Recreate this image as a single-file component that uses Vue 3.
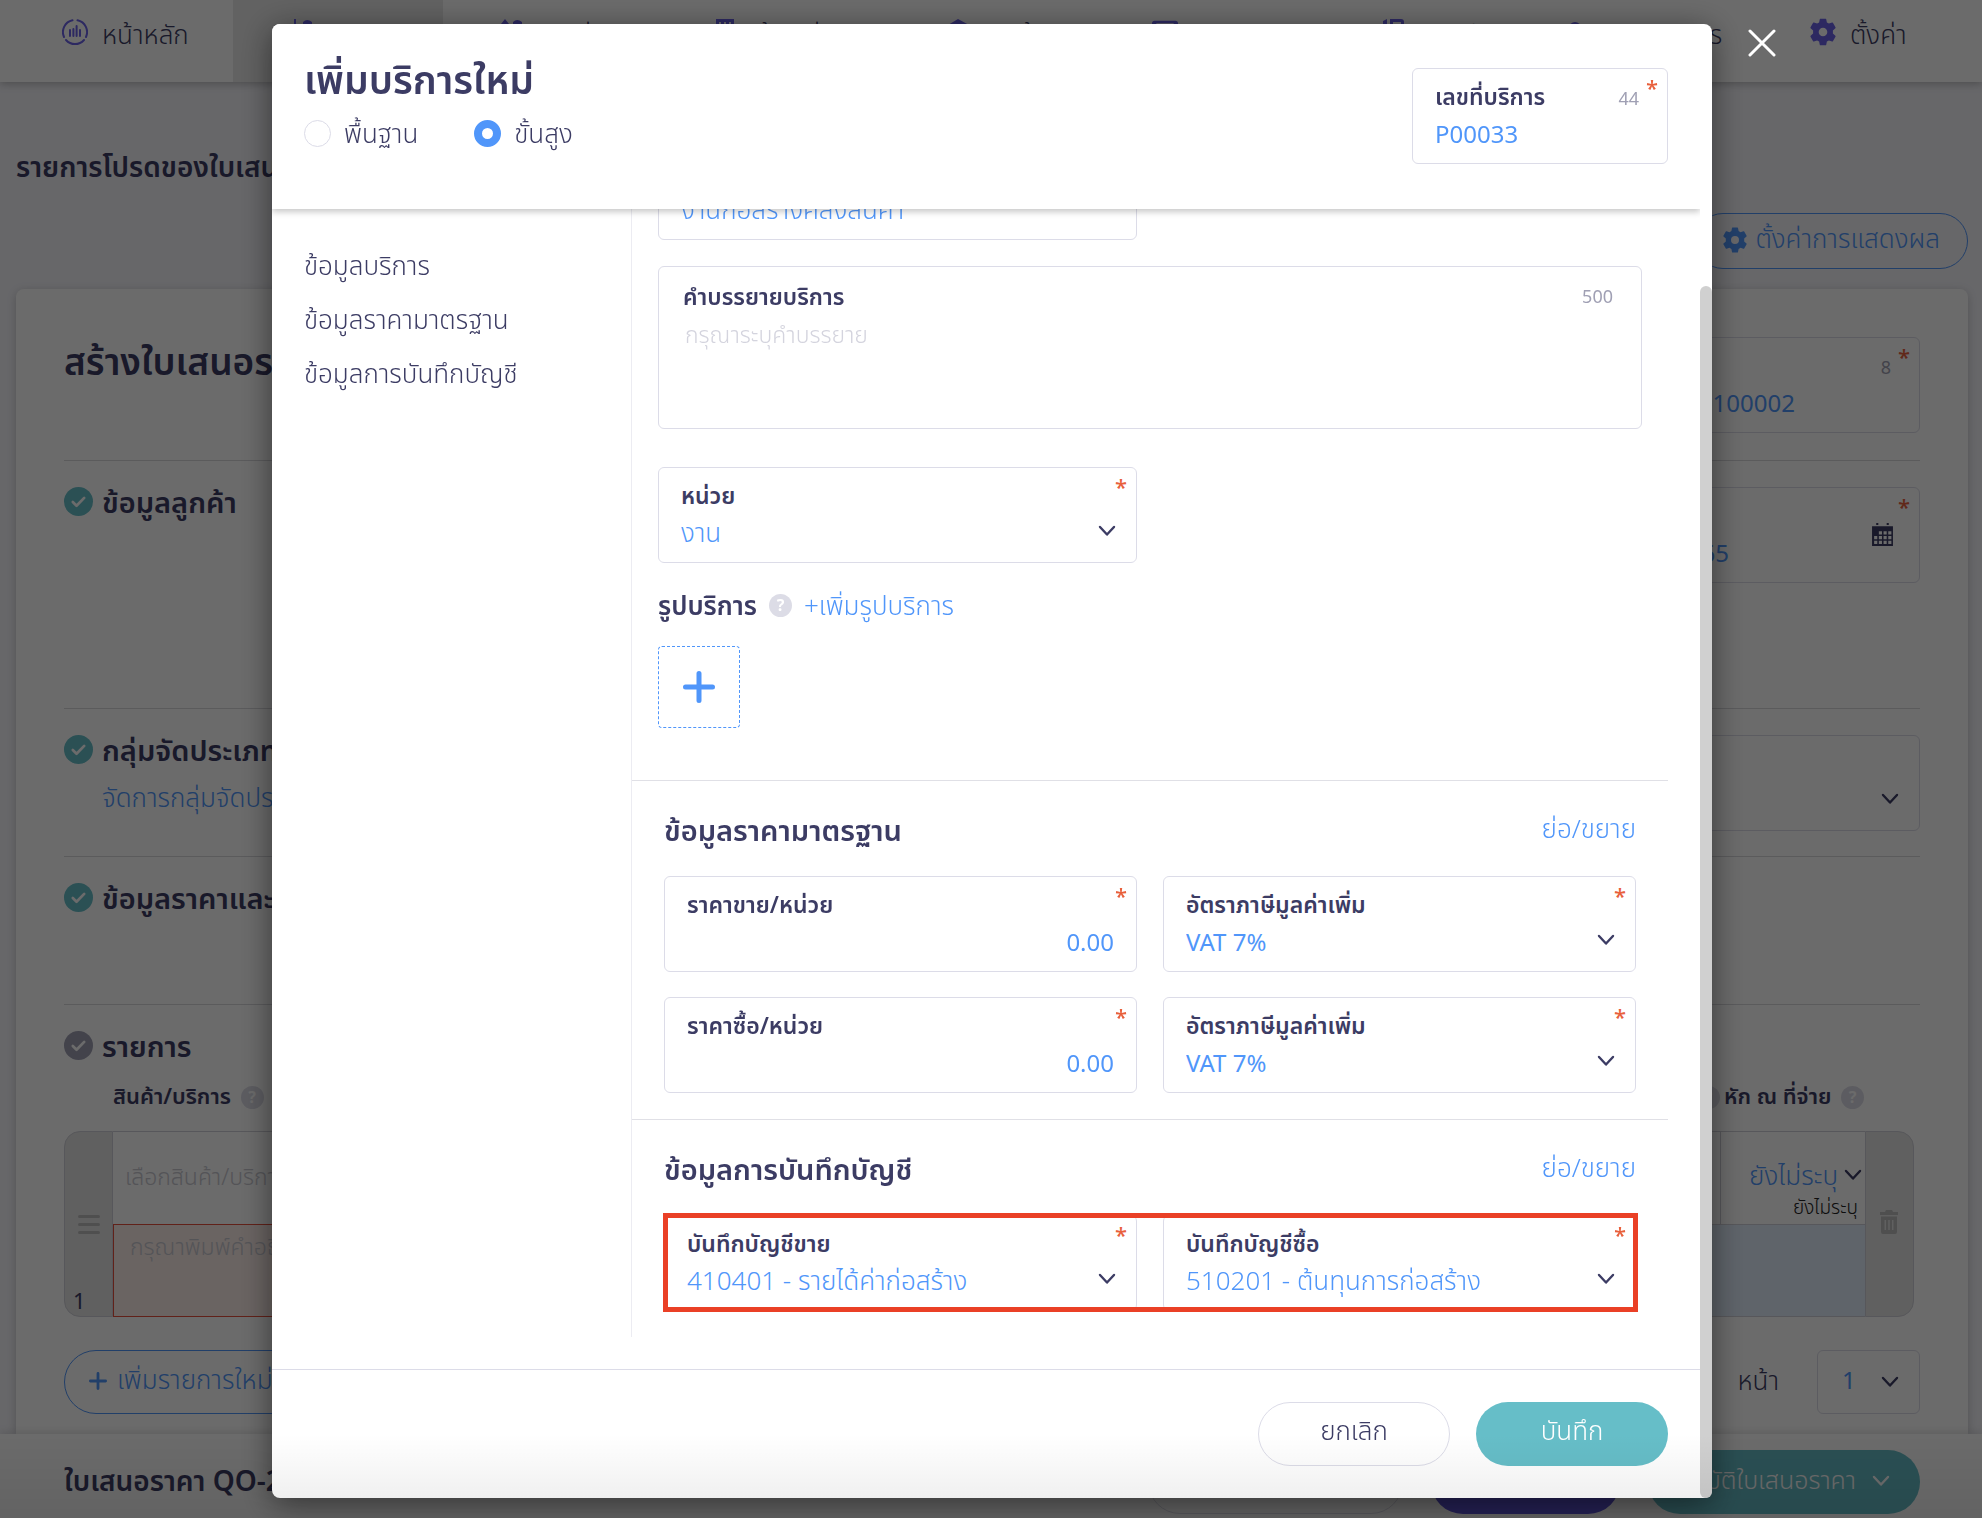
<template>
  <svg class="sprite" aria-hidden="true">
    <symbol id="chevron" viewBox="0 0 18 18">
      <path d="M2 5l7 7.5L16 5" fill="none" stroke="currentColor" stroke-width="2.4" stroke-linecap="round" stroke-linejoin="round" />
    </symbol>
    <symbol id="gear" viewBox="0 0 24 26">
      <path fill="currentColor" fill-rule="evenodd" d="M9.500 0.600h5q.4 0 .5.500l.6 3 1.900 1.100 2.900-1q.5-.2.8.3l2.400 4.200q.2.500-.1.800L21.200 11.600v2.800l2.300 2.100q.3.300.1.800l-2.400 4.200q-.3.500-.8.300l-2.900-1-1.900 1.100-.6 3q-.1.500-.5.500h-5q-.4 0-.5-.500l-.6-3-1.900-1.100-2.900 1q-.5.200-.8-.3L.4 17.300q-.2-.5.1-.8l2.300-2.100v-2.800L.5 9.500q-.3-.3-.1-.8l2.400-4.200q.3-.5.8-.3l2.900 1 1.900-1.100.6-3q.1-.5.400-.500zM12 9a4 4 0 1 0 0 8 4 4 0 0 0 0-8z" />
    </symbol>
    <symbol id="check" viewBox="0 0 28 28">
      <circle cx="14" cy="14" r="14" fill="currentColor" />
      <path d="M8.500 14.500l3.600 3.600 7.400-7.600" fill="none" stroke="#fff" stroke-width="2.600" stroke-linecap="round" stroke-linejoin="round" />
    </symbol>
    <symbol id="plus" viewBox="0 0 32 32">
      <path d="M16 2.500v27M2.500 16h27" fill="none" stroke="currentColor" stroke-width="5" stroke-linecap="round" />
    </symbol>
    <symbol id="home" viewBox="0 0 26 26">
      <g fill="none" stroke="currentColor" stroke-width="2" stroke-linecap="round">
        <path d="M10.500 1.300A12 12 0 0 0 2 18M15.500 1.300A12 12 0 0 1 24 18M4 21a12 12 0 0 0 18 0" />
        <path d="M8 11v6M11.400 10v7M14.600 7v10M18 11v6" />
      </g>
    </symbol>
    <symbol id="income" viewBox="0 0 26 26">
      <path fill="currentColor" d="M5 0h2v6h3l-4 5-4-5h3zM14 3q4-4 9 0v4h-9zM2 13h20v11H2z" />
    </symbol>
    <symbol id="expense" viewBox="0 0 26 26">
      <path fill="currentColor" d="M6 0l4 5H7v6H5V5H2zM14 3q4-4 9 0v4h-9zM2 13h20v11H2z" />
    </symbol>
    <symbol id="building" viewBox="0 0 26 26">
      <path fill="currentColor" fill-rule="evenodd" d="M1 0h18v26H1zM4 3v3h2V3zm5 0v3h2V3zm5 0v3h2V3z" />
    </symbol>
    <symbol id="box" viewBox="0 0 26 26">
      <path fill="currentColor" d="M10 0l11 6v13l-11 6-10-6V6z" />
    </symbol>
    <symbol id="card" viewBox="0 0 30 26">
      <path fill="currentColor" fill-rule="evenodd" d="M3 0h24q3 0 3 3v20H0V3q0-3 3-3zM5 3v2h20V3z" />
    </symbol>
    <symbol id="book" viewBox="0 0 26 26">
      <path fill="currentColor" fill-rule="evenodd" d="M0 2l4-2v26H0zM7 0h11q3 0 3 3v23H7zM10 3v4h8V3z" />
    </symbol>
    <symbol id="user" viewBox="0 0 26 26">
      <circle cx="12" cy="9" r="6" fill="currentColor" />
    </symbol>
    <symbol id="calendar" viewBox="0 0 20 22">
      <path fill="currentColor" fill-rule="evenodd" d="M0 3h20v19H0zM6.500 8v3h3V8zm4.500 0v3h3V8zm4.500 0v3h3V8zM2 12.500v3h3v-3zm4.500 0v3h3v-3zm4.500 0v3h3v-3zm4.500 0v3h3v-3zM2 17v3h3v-3zm4.500 0v3h3v-3zm4.500 0v3h3v-3zm4.500 0v3h3v-3zM4 0h2v2H4zM14 0h2v2h-2z" />
    </symbol>
    <symbol id="trash" viewBox="0 0 20 24">
      <path fill="currentColor" fill-rule="evenodd" d="M7 0h6l1 2h5v3H1V2h5zM2 6.500h16V22q0 2-2 2H4q-2 0-2-2zM5.500 10v10h1.500V10zm3.700 0v10h1.600V10zm3.800 0v10h1.500V10z" />
    </symbol>
  </svg>

  <div class="page">
    <nav class="nav">
      <a v-for="item in navItems" :key="item.label" href="#" class="nav__item" :class="{ 'nav__item--active': item.active }">
        <svg class="nav__icon"><use :href="'#' + item.icon" /></svg>
        <span>{{ item.label }}</span>
      </a>
    </nav>

    <header class="page__head">
      <h1 class="page__title">รายการโปรดของใบเสนอราคา</h1>
      <button class="pill pill--blue pill--settings">
        <svg class="icon24"><use href="#gear" /></svg>
        ตั้งค่าการแสดงผล
      </button>
    </header>

    <main class="card">
      <div class="card__head">
        <h2 class="card__title">สร้างใบเสนอราคา</h2>
        <label class="field field--side">
          <span class="field__label">เลขที่เอกสาร</span>
          <span class="field__count">8</span>
          <span class="field__star">*</span>
          <input class="field__input field__input--end" v-model="docNo" />
        </label>
      </div>

      <section class="row row--tall">
        <svg class="row__check"><use href="#check" /></svg>
        <div class="row__main"><h3>ข้อมูลลูกค้า</h3></div>
        <label class="field field--side">
          <span class="field__label">วันที่ออก</span>
          <span class="field__star">*</span>
          <input class="field__input field__input--date" v-model="docDate" />
          <svg class="field__calendar"><use href="#calendar" /></svg>
        </label>
      </section>

      <section class="row">
        <svg class="row__check"><use href="#check" /></svg>
        <div class="row__main">
          <h3>กลุ่มจัดประเภท</h3>
          <a href="#">จัดการกลุ่มจัดประเภท</a>
        </div>
        <label class="field field--side">
          <select class="field__input" aria-label="กลุ่มจัดประเภท"><option></option></select>
          <svg class="field__chevron"><use href="#chevron" /></svg>
        </label>
      </section>

      <section class="row">
        <svg class="row__check"><use href="#check" /></svg>
        <div class="row__main"><h3>ข้อมูลราคาและภาษี</h3></div>
      </section>

      <section class="row row--list">
        <svg class="row__check row__check--grey"><use href="#check" /></svg>
        <div class="row__main"><h3>รายการ</h3></div>
      </section>

      <table class="items">
        <colgroup>
          <col class="items__edge" />
          <col />
          <col class="items__vat" />
          <col class="items__wht" />
          <col class="items__edge" />
        </colgroup>
        <thead>
          <tr>
            <th></th>
            <th>สินค้า/บริการ <span class="help">?</span></th>
            <th class="items__right"><span class="help">?</span></th>
            <th class="items__indent" colspan="2">หัก ณ ที่จ่าย <span class="help">?</span></th>
          </tr>
        </thead>
        <tbody>
          <tr class="items__top">
            <td class="items__grab" rowspan="2">
              <span class="bars"><i></i><i></i><i></i></span>
              <span class="items__no">1</span>
            </td>
            <td><input class="items__input" placeholder="เลือกสินค้า/บริการ" aria-label="สินค้า/บริการ" /></td>
            <td></td>
            <td class="items__tax">
              <div class="items__pick">ยังไม่ระบุ <svg class="icon18"><use href="#chevron" /></svg></div>
              <small>ยังไม่ระบุ</small>
            </td>
            <td class="items__del" rowspan="2"><svg class="items__trash"><use href="#trash" /></svg></td>
          </tr>
          <tr class="items__bottom">
            <td class="items__error"><textarea class="items__input" placeholder="กรุณาพิมพ์คำอธิบาย" aria-label="คำอธิบาย"></textarea></td>
            <td class="items__sum" colspan="2"></td>
          </tr>
        </tbody>
      </table>

      <div class="pager">
        <button class="pill pill--blue pill--add">
          <svg class="icon18"><use href="#plus" /></svg>
          เพิ่มรายการใหม่
        </button>
        <label class="pager__label" for="page-no">หน้า</label>
        <span class="pager__box">
          <select id="page-no" class="pager__select"><option>1</option></select>
          <svg class="icon18"><use href="#chevron" /></svg>
        </span>
      </div>
    </main>

    <footer class="bar">
      <strong class="bar__title">ใบเสนอราคา QO-20220100002</strong>
      <button class="pill bar__close">ปิด</button>
      <button class="pill bar__draft">บันทึกร่าง</button>
      <button class="pill bar__approve">อนุมัติใบเสนอราคา <svg class="icon18"><use href="#chevron" /></svg></button>
    </footer>
  </div>

  <div class="overlay">
    <div class="modal" role="dialog" aria-labelledby="modal-title">
      <div class="modal__content">
        <header class="modal__head">
          <div>
            <h2 id="modal-title" class="modal__title">เพิ่มบริการใหม่</h2>
            <div class="modes">
              <label v-for="m in modes" :key="m.value" class="modes__item">
                <input type="radio" name="mode" :value="m.value" v-model="mode" />
                {{ m.label }}
              </label>
            </div>
          </div>
          <label class="field field--code">
            <span class="field__label">เลขที่บริการ</span>
            <span class="field__count">44</span>
            <span class="field__star">*</span>
            <input class="field__input" v-model="serviceNo" />
          </label>
        </header>

        <div class="modal__body">
          <nav class="side">
            <a v-for="s in sections" :key="s" href="#">{{ s }}</a>
          </nav>

          <form class="form">
            <div class="form__main">
              <label class="field field--half">
                <span class="field__label">ชื่อบริการ</span>
                <input class="field__input field__input--thai" v-model="serviceName" />
              </label>
              <label class="field field--area">
                <span class="field__label">คำบรรยายบริการ</span>
                <span class="field__count">500</span>
                <textarea class="field__input" placeholder="กรุณาระบุคำบรรยาย"></textarea>
              </label>
              <label class="field field--half">
                <span class="field__label">หน่วย</span>
                <span class="field__star">*</span>
                <select class="field__input field__input--thai"><option>งาน</option></select>
                <svg class="field__chevron"><use href="#chevron" /></svg>
              </label>
              <div class="photo">
                <strong>รูปบริการ</strong>
                <span class="help">?</span>
                <a href="#">+เพิ่มรูปบริการ</a>
              </div>
              <button type="button" class="photo__add" aria-label="เพิ่มรูปบริการ">
                <svg><use href="#plus" /></svg>
              </button>
            </div>

            <section class="group">
              <div class="group__head">
                <h3>ข้อมูลราคามาตรฐาน</h3>
                <a href="#">ย่อ/ขยาย</a>
              </div>
              <div class="group__grid">
                <template v-for="p in prices" :key="p.label">
                  <label class="field">
                    <span class="field__label">{{ p.label }}</span>
                    <span class="field__star">*</span>
                    <input class="field__input field__input--num" v-model="p.value" />
                  </label>
                  <label class="field">
                    <span class="field__label">อัตราภาษีมูลค่าเพิ่ม</span>
                    <span class="field__star">*</span>
                    <select class="field__input"><option>{{ p.vat }}</option></select>
                    <svg class="field__chevron"><use href="#chevron" /></svg>
                  </label>
                </template>
              </div>
            </section>

            <section class="group">
              <div class="group__head">
                <h3>ข้อมูลการบันทึกบัญชี</h3>
                <a href="#">ย่อ/ขยาย</a>
              </div>
              <div class="group__grid group__grid--marked">
                <label v-for="a in accounts" :key="a.label" class="field">
                  <span class="field__label">{{ a.label }}</span>
                  <span class="field__star">*</span>
                  <select class="field__input field__input--thai"><option>{{ a.value }}</option></select>
                  <svg class="field__chevron"><use href="#chevron" /></svg>
                </label>
              </div>
            </section>
          </form>
        </div>

        <footer class="modal__foot">
          <button class="pill pill--cancel">ยกเลิก</button>
          <button class="pill pill--save">บันทึก</button>
        </footer>
      </div>
      <div class="modal__scroll"><div class="modal__thumb"></div></div>
      <button class="modal__close" aria-label="ปิด">
        <svg viewBox="0 0 28 28"><path d="M2 2l24 24M26 2L2 26" stroke="#fff" stroke-width="3" stroke-linecap="round" /></svg>
      </button>
    </div>
    <div class="shade"></div>
  </div>
</template>

<script setup>
import { ref } from 'vue'

const navItems = [
  { label: 'หน้าหลัก', icon: 'home' },
  { label: 'รายรับ', icon: 'income', active: true },
  { label: 'รายจ่าย', icon: 'expense' },
  { label: 'ผู้ติดต่อ', icon: 'building' },
  { label: 'สินค้า', icon: 'box' },
  { label: 'การเงิน', icon: 'card' },
  { label: 'บัญชี', icon: 'book' },
  { label: 'คลังเอกสาร', icon: 'user' },
  { label: 'ตั้งค่า', icon: 'gear' },
]

const modes = [
  { value: 'basic', label: 'พื้นฐาน' },
  { value: 'advanced', label: 'ขั้นสูง' },
]
const mode = ref('advanced')

const sections = ['ข้อมูลบริการ', 'ข้อมูลราคามาตรฐาน', 'ข้อมูลการบันทึกบัญชี']

const docNo = ref('QO-20220100002')
const docDate = ref('15/01/2565')
const serviceNo = ref('P00033')
const serviceName = ref('งานก่อสร้างคลังสินค้า')

const prices = ref([
  { label: 'ราคาขาย/หน่วย', value: '0.00', vat: 'VAT 7%' },
  { label: 'ราคาซื้อ/หน่วย', value: '0.00', vat: 'VAT 7%' },
])

const accounts = [
  { label: 'บันทึกบัญชีขาย', value: '410401 - รายได้ค่าก่อสร้าง' },
  { label: 'บันทึกบัญชีซื้อ', value: '510201 - ต้นทุนการก่อสร้าง' },
]
</script>

<style>
body {
  font-family: "Noto Sans", "Noto Sans Thai", sans-serif;
  font-size: 26px;
  font-weight: 300;
  color: #3c3c64;
}
</style>

<style scoped>
* { box-sizing: border-box; }
a { color: #5096fa; text-decoration: none; }
h1, h2, h3 { margin: 0; font-weight: 600; }
button, input, select, textarea {
  font: inherit;
  color: inherit;
  margin: 0;
  padding: 0;
  border: 0;
  background: none;
}
select { appearance: none; }
.sprite { position: absolute; width: 0; height: 0; }
.icon18 { width: 18px; height: 18px; color: #3c3c64; }
.icon24 { width: 24px; height: 26px; }

.page {
  height: 100vh;
  display: flex;
  flex-direction: column;
  overflow: hidden;
  background: #f5f5fa;
}

.nav {
  display: grid;
  grid-template-columns: 227fr 210fr 216fr 233fr 204fr 231fr 180fr 247fr 228fr;
  flex: none;
  height: 82px;
  padding-left: 6px;
  background: #fff;
  box-shadow: 0 2px 8px rgba(0,0,0,.25);
}
.nav__item {
  display: flex;
  gap: 14px;
  padding: 18px 0 0 56px;
  line-height: 32px;
  white-space: nowrap;
  color: #3c3c64;
}
.nav__item--active { background: #e9e9e9; }
.nav__icon { width: 26px; height: 28px; color: #6c63e8; }

.page__head {
  display: flex;
  flex-direction: column;
  padding: 64px 14px 20px 16px;
}
.page__title { font-size: 28px; line-height: 40px; }

.pill {
  display: inline-flex;
  align-items: center;
  justify-content: center;
  height: 64px;
  padding-bottom: 4px;
  border-radius: 32px;
}
.pill--blue { border: 1px solid #5096fa; color: #5096fa; }
.pill--settings {
  align-self: flex-end;
  gap: 8px;
  height: 56px;
  margin-top: 27px;
  padding: 0 27px 2px;
}

.card {
  flex: 1;
  margin: 0 14px 0 16px;
  padding: 0 48px;
  border-radius: 8px 8px 0 0;
  background: #fff;
  box-shadow: 0 2px 10px rgba(0,0,0,.2);
  min-height: 0;
}
.card__head {
  display: flex;
  justify-content: space-between;
  height: 171px;
  padding-top: 48px;
}
.card__title { font-size: 37px; line-height: 48px; }

.row {
  display: flex;
  align-items: flex-start;
  gap: 9px;
  height: 148px;
  padding-top: 26px;
  border-top: 1px solid #d8d8dc;
}
.row--tall { height: 248px; }
.row--list { height: 79px; }
.row__main { flex: 1; }
.row__main h3 { font-size: 29px; line-height: 30px; }
.row__main a { display: block; margin-top: 16px; line-height: 32px; }
.row__check { width: 29px; height: 29px; color: #66bec8; }
.row__check--grey { color: #a0a0b3; }

.field {
  position: relative;
  display: block;
  height: 96px;
  padding: 13px 22px;
  border: 1px solid #dcdce8;
  border-radius: 6px;
  background: #fff;
}
.field__label {
  display: block;
  height: 34px;
  font-size: 23px;
  font-weight: 600;
  line-height: 28px;
}
.field__input {
  display: block;
  width: 100%;
  height: 36px;
  font-size: 24px;
  font-weight: 400;
  line-height: 36px;
  color: #5096fa;
  outline: none;
  resize: none;
}
.field__input--thai { height: 34px; font-size: 26px; font-weight: 300; line-height: 34px; }
.field__input--num { text-align: right; }
.field__input--end { text-align: right; padding-right: 102px; }
.field__input--date { text-align: right; padding-right: 168px; }
.field__input::placeholder { color: #d4d4de; font-size: 23px; font-weight: 300; }
.field__count {
  position: absolute;
  top: 16px;
  right: 28px;
  font-size: 18px;
  font-weight: 400;
  line-height: 26px;
  color: #a0a0b4;
}
.field__star {
  position: absolute;
  top: 6px;
  right: 9px;
  font-size: 22px;
  font-weight: 500;
  line-height: 24px;
  color: #e8603c;
}
.field__chevron {
  position: absolute;
  top: 54px;
  right: 20px;
  width: 18px;
  height: 18px;
}
.field__calendar {
  position: absolute;
  top: 35px;
  right: 26px;
  width: 21px;
  height: 23px;
}
.field--side { width: 480px; }
.field--code { width: 256px; }
.field--half { width: 479px; }
.field--area { height: 163px; padding: 15px 24px; }
.field--area .field__input { height: 100px; padding-left: 2px; }

.help {
  display: inline-flex;
  align-items: center;
  justify-content: center;
  width: 23px;
  height: 23px;
  border-radius: 50%;
  font-size: 16px;
  font-weight: 700;
  line-height: 23px;
  color: #fff;
  background: #dcdce6;
}

.items {
  width: calc(100% - 6px);
  border-collapse: separate;
  border-spacing: 0;
  table-layout: fixed;
}
.items th {
  height: 46px;
  padding: 0 0 22px;
  font-size: 22px;
  font-weight: 600;
  line-height: 24px;
  text-align: left;
  white-space: nowrap;
}
.items th .help { margin-left: 4px; vertical-align: 1px; }
.items td { padding: 0; border-top: 1px solid #d0d0d8; }
.items__edge { width: 49px; }
.items__vat { width: 120px; }
.items__wht { width: 145px; }
.items th.items__right { text-align: right; }
.items th.items__indent { padding-left: 4px; }
.items__top td, .items__bottom td { height: 93px; }
.items td.items__grab, .items td.items__del {
  position: relative;
  border: 1px solid #d0d0d8;
  background: #e4e4e4;
}
.items__grab { border-radius: 16px 0 0 16px; }
.items__del { border-radius: 0 16px 16px 0; text-align: center; }
.items__trash { width: 20px; height: 24px; color: #bcbcbc; }
.bars { display: grid; gap: 5px; width: 22px; margin: 0 auto; }
.bars i { height: 3px; border-radius: 2px; background: #bcbcbc; }
.items__no {
  position: absolute;
  left: 8px;
  bottom: 3px;
  font-size: 22px;
  font-weight: 400;
  line-height: 26px;
}
.items td.items__tax {
  border-left: 1px solid #d0d0d8;
  padding: 30px 3px 0 0;
  text-align: right;
  vertical-align: top;
  line-height: 26px;
}
.items__pick {
  display: flex;
  align-items: center;
  justify-content: flex-end;
  gap: 6px;
  color: #5096fa;
}
.items__tax small { display: block; margin-top: 7px; padding-right: 4px; font-size: 19px; line-height: 24px; color: #222; }
.items__input { display: block; width: 100%; height: 62px; padding: 0 0 6px 12px; resize: none; }
.items__input::placeholder { color: #c8c8d0; font-size: 23px; }
.items td.items__error { border: 1px solid #e8503c; background: #fdeeea; }
.items__error .items__input { height: 84px; padding: 1px 0 0 16px; }
.items td.items__sum { border-bottom: 1px solid #d0d0d8; background: #e2eefc; }

.pager {
  display: flex;
  align-items: center;
  margin-top: 33px;
}
.pill--add { gap: 10px; padding: 0 40px 2px 24px; margin-right: auto; }
.pill--add .icon18 { color: #5096fa; }
.pager__label { margin-right: 38px; }
.pager__box {
  display: flex;
  align-items: center;
  width: 103px;
  height: 64px;
  padding: 0 20px 0 24px;
  border: 1px solid #dcdce8;
  border-radius: 6px;
}
.pager__select { flex: 1; padding-bottom: 6px; color: #5096fa; font-size: 24px; font-weight: 400; }

.bar {
  display: flex;
  align-items: center;
  gap: 28px;
  flex: none;
  height: 84px;
  padding: 12px 62px 0 64px;
  background: #fff;
  box-shadow: 0 -2px 8px rgba(0,0,0,.12);
  position: relative;
}
.bar__title { margin-right: auto; font-size: 28px; font-weight: 600; }
.bar__close { width: 255px; border: 1px solid #dcdce8; }
.bar__draft { width: 189px; color: #fff; background: #5d53d6; }
.bar__approve { width: 272px; gap: 16px; padding: 0 2px 2px 0; color: #fff; background: #66bec8; font-size: 25px; }
.bar__approve .icon18 { color: #fff; }

.overlay {
  position: fixed;
  inset: 0;
  display: flex;
  justify-content: center;
  padding: 24px 0 20px 2px;
  background: rgba(0,0,0,.58);
}
.modal {
  position: relative;
  display: flex;
  width: min(1440px, calc(100% - 160px));
  border-radius: 8px;
  background: #fff;
  box-shadow: 0 6px 32px rgba(0,0,0,.5);
}
.modal__content {
  flex: 1;
  display: flex;
  flex-direction: column;
  min-width: 0;
}
.modal__head {
  display: flex;
  justify-content: space-between;
  flex: none;
  height: 185px;
  padding: 27px 32px 0;
  border-radius: 8px 0 0 0;
  background: #fff;
  box-shadow: 0 3px 6px rgba(0,0,0,.22);
  clip-path: inset(0 0 -12px 0);
  z-index: 1;
}
.modal__head .field { margin-top: 17px; }
.modal__title { font-size: 39px; line-height: 56px; }
.modes { display: flex; gap: 56px; margin-top: 6px; }
.modes__item { display: flex; align-items: center; gap: 13px; line-height: 40px; }
.modes__item input {
  appearance: none;
  width: 27px;
  height: 27px;
  border: 1px solid #dcdce8;
  border-radius: 50%;
  background: #fff;
}
.modes__item input:checked { border: 8px solid #5096fa; }

.modal__body {
  flex: 1;
  display: flex;
  min-height: 0;
  padding-bottom: 32px;
  overflow: hidden;
}
.side {
  display: flex;
  flex-direction: column;
  gap: 20px;
  width: 360px;
  padding: 39px 32px;
  border-right: 1px solid #ececf2;
  line-height: 34px;
}
.side a { color: #3c3c64; }
/* the form is scrolled to its end */
.form {
  flex: 1;
  display: flex;
  flex-direction: column;
  justify-content: flex-end;
  min-width: 0;
  padding-right: 32px;
}
.form__main {
  display: flex;
  flex-direction: column;
  padding: 0 26px 52px;
}
.form__main .field--area { margin: 26px 0 38px; }
.photo {
  display: flex;
  align-items: center;
  gap: 12px;
  margin: 25px 0 24px;
  line-height: 34px;
}
.photo strong { font-size: 26px; font-weight: 600; }
.photo__add {
  display: flex;
  align-items: center;
  justify-content: center;
  width: 82px;
  height: 82px;
  border: 1px dashed #5096fa;
  border-radius: 4px;
  color: #5096fa;
}
.photo__add svg { width: 32px; height: 32px; }

.group { border-top: 1px solid #e0e0e6; padding: 31px 32px 26px; }
.group__head {
  display: flex;
  justify-content: space-between;
  align-items: center;
  height: 36px;
  margin-bottom: 28px;
}
.group__head h3 { font-size: 29px; line-height: 36px; }
.group__grid {
  position: relative;
  display: grid;
  grid-template-columns: 1fr 1fr;
  gap: 25px 26px;
}
.group__grid--marked::after {
  content: "";
  position: absolute;
  inset: -2px -2px -1px -1px;
  border: 5px solid #ea4026;
  pointer-events: none;
}

.modal__foot {
  display: flex;
  justify-content: flex-end;
  gap: 26px;
  flex: none;
  height: 129px;
  padding: 32px 32px 0;
  border-top: 1px solid #dcdce8;
}
.modal__foot .pill { width: 192px; font-size: 26px; }
.pill--cancel { border: 1px solid #dcdce8; }
.pill--save { color: #fff; background: #66bec8; }

.modal__scroll {
  display: flex;
  align-items: flex-end;
  width: 12px;
}
.modal__thumb {
  width: 12px;
  height: calc(100% - 262px);
  border-radius: 6px;
  background: #d0d0d0;
}
.modal__close {
  position: absolute;
  top: 5px;
  right: -64px;
  width: 28px;
  height: 28px;
  line-height: 0;
}
.shade {
  position: absolute;
  inset: auto 0 0;
  height: 84px;
  background: linear-gradient(rgba(0,0,0,0), rgba(0,0,0,.08));
  pointer-events: none;
}
</style>
